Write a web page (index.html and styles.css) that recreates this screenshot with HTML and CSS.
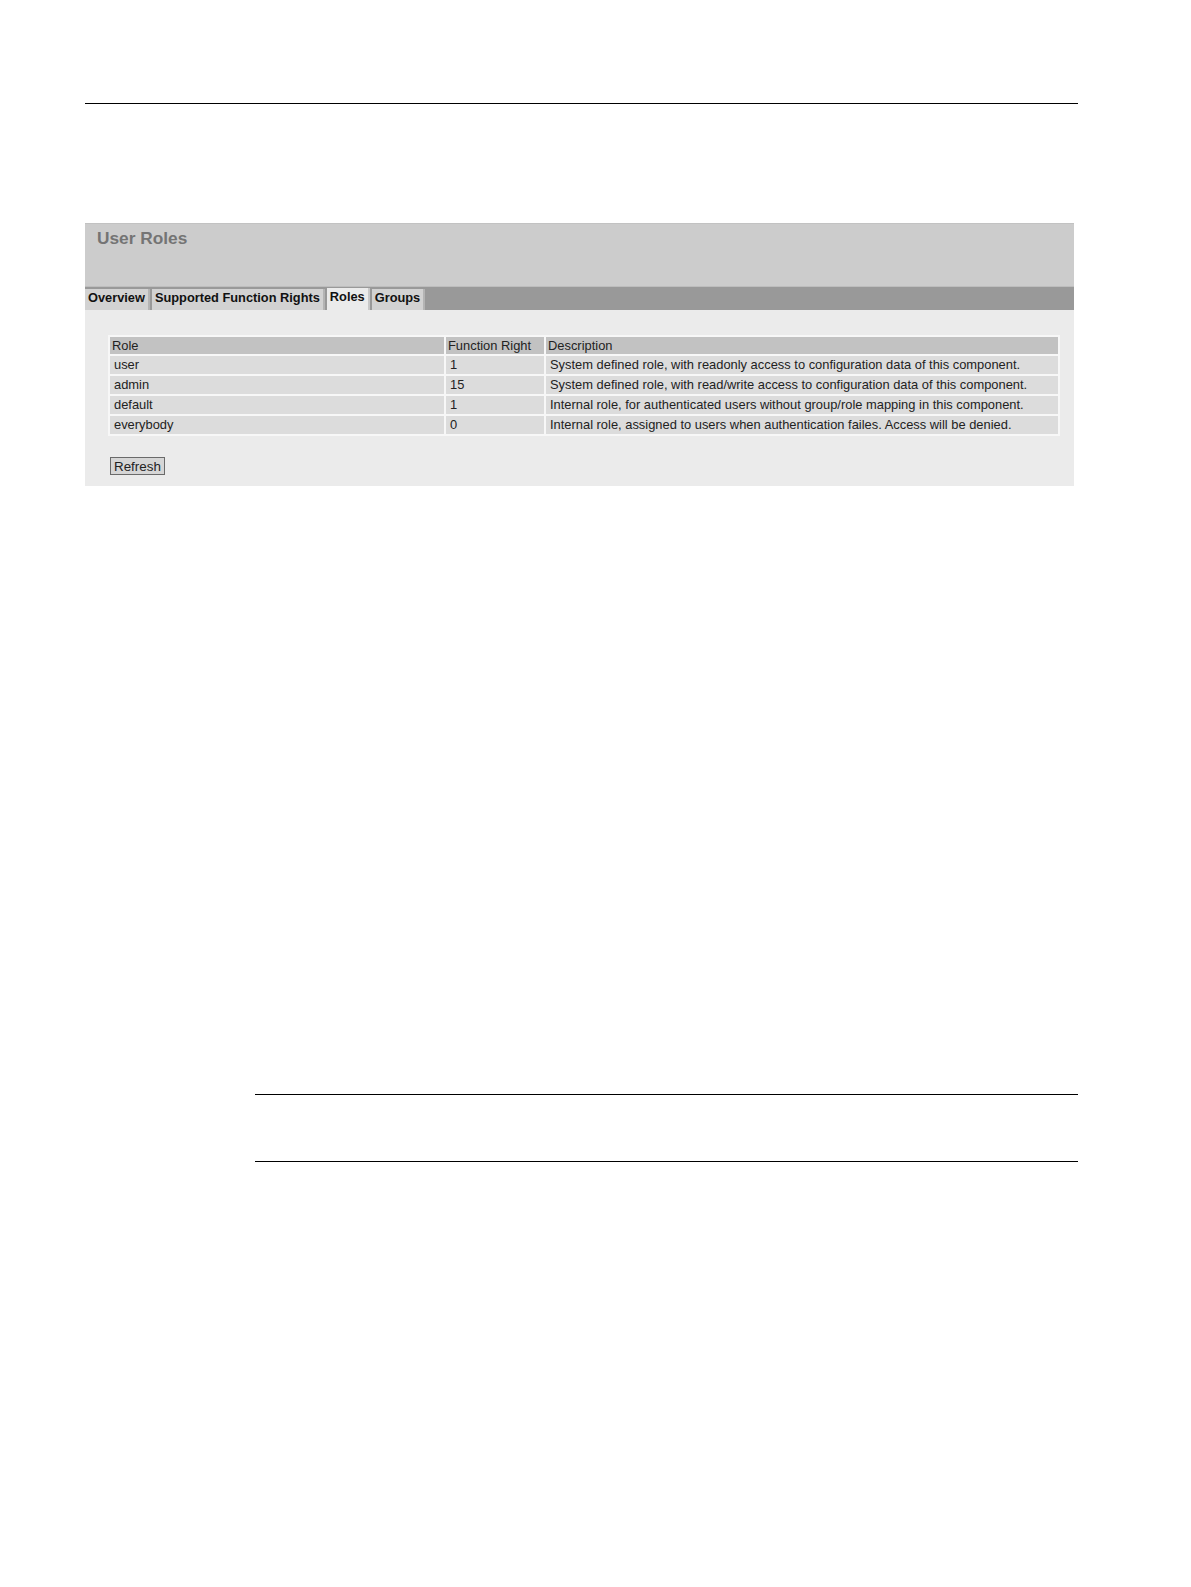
FILE: index.html
```html
<!DOCTYPE html>
<html>
<head>
<meta charset="utf-8">
<link rel="stylesheet" href="styles.css">
</head>
<body>
<div class="page">
  <div class="top-rule"></div>
  <div class="panel">
    <div class="panel-head">
      <h1 class="title">User Roles</h1>
    </div>
    <div class="tabbar">
      <span class="tab">Overview</span>
      <span class="tab">Supported Function Rights</span>
      <span class="tab active">Roles</span>
      <span class="tab">Groups</span>
    </div>
    <div class="panel-body">
      <table class="grid">
        <thead>
          <tr><th class="c-role">Role</th><th class="c-fr">Function Right</th><th class="c-desc">Description</th></tr>
        </thead>
        <tbody>
          <tr><td>user</td><td>1</td><td>System defined role, with readonly access to configuration data of this component.</td></tr>
          <tr><td>admin</td><td>15</td><td>System defined role, with read/write access to configuration data of this component.</td></tr>
          <tr><td>default</td><td>1</td><td>Internal role, for authenticated users without group/role mapping in this component.</td></tr>
          <tr><td>everybody</td><td>0</td><td>Internal role, assigned to users when authentication failes. Access will be denied.</td></tr>
        </tbody>
      </table>
      <button class="btn" type="button">Refresh</button>
    </div>
  </div>
  <div class="note">
    <div class="note-rule"></div>
    <div class="note-space"></div>
    <div class="note-rule"></div>
  </div>
</div>
</body>
</html>
```

FILE: styles.css
```css
html, body {
  margin: 0;
  padding: 0;
  background: #fff;
}
.page {
  padding: 103px 0 0 85px;
  width: 993px;
  font-family: "Liberation Sans", Arial, sans-serif;
}
.top-rule {
  height: 1px;
  background: #000;
  width: 993px;
}
.panel {
  margin-top: 119px;
  width: 989px;
  background: #ebebeb;
}
.panel-head {
  background: #cccccc;
  border-top: 1px solid #c2c2c2;
  height: 62px;
  border-bottom: 1px solid #bdbdbd;
}
.title {
  margin: 0;
  padding: 4px 0 0 12px;
  font-size: 17.3px;
  font-weight: bold;
  color: #747474;
  line-height: 21px;
}
.tabbar {
  background: #999999;
  height: 23px;
  display: flex;
  align-items: flex-end;
  gap: 2px;
}
.tab {
  display: block;
  height: 21px;
  line-height: 17px;
  padding: 0 3px;
  background: #d2d2d2;
  border-right: 2px solid #b4b4b4;
  font-size: 12.8px;
  font-weight: bold;
  color: #111;
  box-sizing: border-box;
}
.tab.active {
  background: #ebebeb;
  height: 22px;
  border-right: 2px solid #c8c8c8;
}
.panel-body {
  padding: 25px 0 11px 24px;
}
.grid {
  width: 952px;
  border-collapse: separate;
  border-spacing: 2px;
  background: #f7f7f7;
  margin-left: -1px;
  font-size: 12.9px;
  color: #222;
}
.grid th {
  background: #c2c2c2;
  font-weight: normal;
  text-align: left;
  padding: 0 2px;
  height: 17px;
  line-height: 17px;
}
.grid td {
  background: #dcdcdc;
  padding: 0 4px;
  height: 18px;
  line-height: 18px;
}
.c-role { width: 330px; }
.c-fr { width: 94px; }
.btn {
  display: block;
  margin: 21px 0 0 1px;
  font-family: "Liberation Sans", Arial, sans-serif;
  font-size: 13.4px;
  color: #222;
  background: #d6d6d6;
  border: 1px solid #6a6a6a;
  padding: 0 3px;
  height: 18px;
  line-height: 15px;
  border-radius: 0;
}
.note {
  margin: 608px 0 0 170px;
  width: 823px;
}
.note-rule {
  height: 1px;
  background: #000;
}
.note-space {
  height: 66px;
}
```
